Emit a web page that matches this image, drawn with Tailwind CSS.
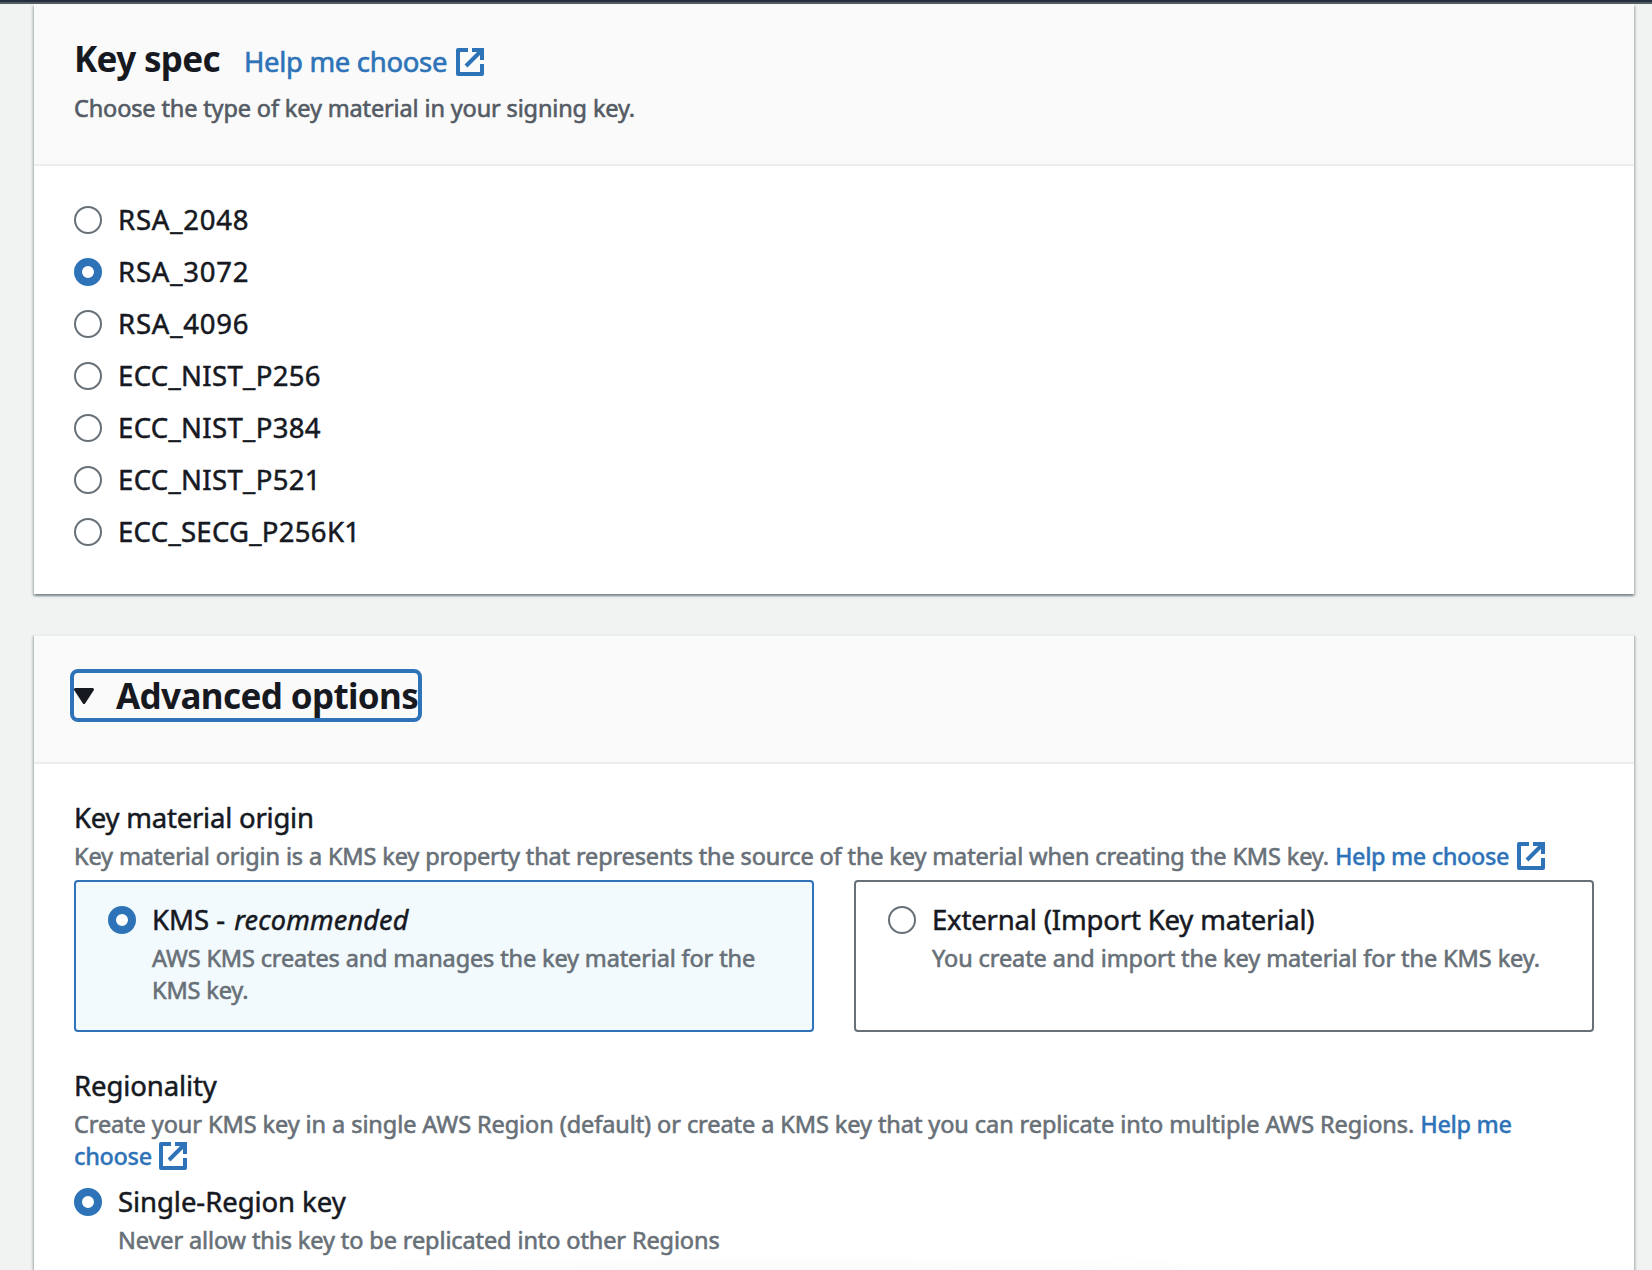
<!DOCTYPE html>
<html lang="en">
<head>
<meta charset="utf-8">
<title>Configure key</title>
<script src="https://cdn.jsdelivr.net/npm/@tailwindcss/browser@4"></script>
</head>
<body class="h-[1270px] overflow-hidden bg-[#f1f3f3] font-['Noto_Sans','Open_Sans',sans-serif] text-[#16191f]">
<svg class="hidden">
  <symbol id="external" viewBox="0 0 28 28">
    <path d="M12 2H2v24h24V16" fill="none" stroke="currentColor" stroke-width="4" stroke-linejoin="round"/>
    <path d="M16 2h10v10M26 2 10 18" fill="none" stroke="currentColor" stroke-width="4"/>
  </symbol>
</svg>
<div class="h-1 border-b-2 border-[#545b64] bg-[#232f3e]"></div>
<main class="relative h-[1266px] overflow-hidden pl-[34px]">

  <section class="h-[590px] w-[1600px] bg-white shadow-[0_2px_2px_0_rgba(0,28,36,0.3),2px_2px_2px_0_rgba(0,28,36,0.15),-2px_2px_2px_0_rgba(0,28,36,0.15)]">
    <header class="h-[162px] border-b-2 border-[#eaeded] bg-[#fafafa] px-10 pt-[33px]">
      <div class="flex h-11 items-baseline leading-[44px]">
        <h2 class="w-[170px] whitespace-nowrap text-[35px] font-bold tracking-[-0.65px]">Key spec</h2>
        <a class="whitespace-nowrap text-[27.5px] tracking-[-0.32px] text-[#2e73b8] [-webkit-text-stroke:0.6px]">Help me choose<svg class="ml-[9px] inline-block size-7 align-[-4px]"><use href="#external"/></svg></a>
      </div>
      <p class="mt-[11px] text-[23.5px] leading-8 tracking-[-0.14px] text-[#545b64] [-webkit-text-stroke:0.6px]">Choose the type of key material in your signing key.</p>
    </header>
    <div class="flex flex-col gap-2 pl-10 pt-8 text-[27.5px] leading-[41px] [-webkit-text-stroke:0.5px]">
      <label class="flex h-11 items-center gap-4"><span class="size-7 rounded-full border-2 border-[#687078]"></span><span class="pb-0.5 tracking-[0.8px]">RSA_2048</span></label>
      <label class="flex h-11 items-center gap-4"><span class="size-7 rounded-full border-8 border-[#2e73b8] bg-white"></span><span class="pb-0.5 tracking-[0.8px]">RSA_3072</span></label>
      <label class="flex h-11 items-center gap-4"><span class="size-7 rounded-full border-2 border-[#687078]"></span><span class="pb-0.5 tracking-[0.8px]">RSA_4096</span></label>
      <label class="flex h-11 items-center gap-4"><span class="size-7 rounded-full border-2 border-[#687078]"></span><span class="pb-0.5 tracking-[0.35px]">ECC_NIST_P256</span></label>
      <label class="flex h-11 items-center gap-4"><span class="size-7 rounded-full border-2 border-[#687078]"></span><span class="pb-0.5 tracking-[0.35px]">ECC_NIST_P384</span></label>
      <label class="flex h-11 items-center gap-4"><span class="size-7 rounded-full border-2 border-[#687078]"></span><span class="pb-0.5 tracking-[0.35px]">ECC_NIST_P521</span></label>
      <label class="flex h-11 items-center gap-4"><span class="size-7 rounded-full border-2 border-[#687078]"></span><span class="pb-0.5 tracking-[0.3px]">ECC_SECG_P256K1</span></label>
    </div>
  </section>

  <section class="mt-10 h-[700px] w-[1600px] border-t-2 border-[#eaeded] bg-white shadow-[0_2px_2px_0_rgba(0,28,36,0.3),2px_2px_2px_0_rgba(0,28,36,0.15),-2px_2px_2px_0_rgba(0,28,36,0.15)]">
    <header class="h-32 border-b-2 border-[#eaeded] bg-[#fafafa] pl-9 pt-[33px]">
      <h2 class="flex h-[53px] w-[352px] items-center rounded-lg border-4 border-[#2e73b8] text-[35px] font-bold leading-[44px]">
        <svg class="h-4 w-5 shrink-0" viewBox="0 0 20 16"><path d="M1.5 1.5h17L10 14.5z" fill="#16191f" stroke="#16191f" stroke-width="3" stroke-linejoin="round"/></svg>
        <span class="ml-[22px] whitespace-nowrap tracking-[-0.62px]">Advanced options</span>
      </h2>
    </header>
    <div class="px-10 pt-8">
      <h3 class="h-11 text-[27.5px] leading-[44px] tracking-[-0.22px] [-webkit-text-stroke:0.5px]">Key material origin</h3>
      <p class="whitespace-nowrap text-[23.5px] leading-8 tracking-[-0.135px] text-[#687078] [-webkit-text-stroke:0.6px]">Key material origin is a KMS key property that represents the source of the key material when creating the KMS key. <a class="font-medium tracking-[-0.4px] text-[#2e73b8] [-webkit-text-stroke:0.3px]">Help me choose<svg class="ml-2 inline-block size-7 align-[-5px]"><use href="#external"/></svg></a></p>
      <div class="mt-2 grid h-[152px] grid-cols-2 gap-10">
        <div class="flex gap-4 rounded border-2 border-[#2e73b8] bg-[#f2fafd] pl-8 pt-4">
          <span class="mt-2 size-7 shrink-0 rounded-full border-8 border-[#2e73b8] bg-white"></span>
          <div>
            <div class="h-11 text-[27.5px] leading-[43px] [-webkit-text-stroke:0.5px]">KMS - <em class="ml-0.5 text-[27px] tracking-[0.2px]">recommended</em></div>
            <p class="whitespace-nowrap text-[23.5px] leading-8 tracking-[-0.14px] text-[#687078] [-webkit-text-stroke:0.6px]">AWS KMS creates and manages the key material for the<br>KMS key.</p>
          </div>
        </div>
        <div class="flex gap-4 rounded border-2 border-[#687078] bg-white pl-8 pt-4">
          <span class="mt-2 size-7 shrink-0 rounded-full border-2 border-[#687078]"></span>
          <div class="whitespace-nowrap">
            <div class="h-11 text-[27.5px] leading-[43px] tracking-[-0.17px] [-webkit-text-stroke:0.5px]">External (Import Key material)</div>
            <p class="text-[23.5px] leading-8 tracking-[-0.09px] text-[#687078] [-webkit-text-stroke:0.6px]">You create and import the key material for the KMS key.</p>
          </div>
        </div>
      </div>
      <h3 class="mt-8 h-11 text-[27.5px] leading-[44px] tracking-[-0.1px] [-webkit-text-stroke:0.5px]">Regionality</h3>
      <p class="whitespace-nowrap text-[23.5px] leading-8 tracking-[-0.08px] text-[#687078] [-webkit-text-stroke:0.6px]">Create your KMS key in a single AWS Region (default) or create a KMS key that you can replicate into multiple AWS Regions. <a class="font-medium tracking-[-0.35px] text-[#2e73b8] [-webkit-text-stroke:0.3px]">Help me<br>choose<svg class="ml-[7px] inline-block size-7 align-[-5px]"><use href="#external"/></svg></a></p>
      <div class="mt-2 flex gap-4">
        <span class="mt-2 size-7 shrink-0 rounded-full border-8 border-[#2e73b8] bg-white"></span>
        <div>
          <div class="h-11 text-[27.5px] leading-[43px] tracking-[-0.06px] [-webkit-text-stroke:0.5px]">Single-Region key</div>
          <p class="text-[23.5px] leading-8 tracking-[-0.11px] text-[#687078] [-webkit-text-stroke:0.6px]">Never allow this key to be replicated into other Regions</p>
        </div>
      </div>
    </div>
  </section>
  <div class="pointer-events-none absolute bottom-0 left-[200px] h-4 w-[1170px] bg-[radial-gradient(ellipse_at_bottom,rgba(0,0,0,0.02),transparent_70%)]"></div>
</main>
</body>
</html>
